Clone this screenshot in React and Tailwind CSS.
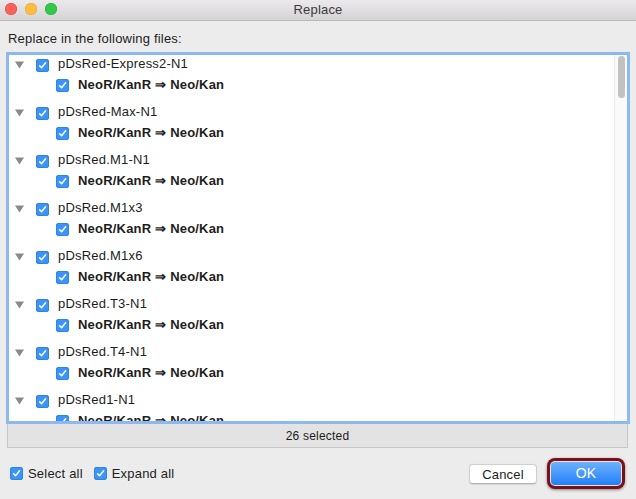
import React from 'react';

const files = [
  'pDsRed-Express2-N1',
  'pDsRed-Max-N1',
  'pDsRed.M1-N1',
  'pDsRed.M1x3',
  'pDsRed.M1x6',
  'pDsRed.T3-N1',
  'pDsRed.T4-N1',
  'pDsRed1-N1',
];

const Check = () => (
  <span className="flex h-[13px] w-[13px] shrink-0 items-center justify-center rounded-[3px] bg-[#3b95f8] shadow-[inset_0_0_0_1px_#2f84e6]">
    <svg width="9" height="9" viewBox="0 0 9 9" fill="none">
      <path d="M1.6 4.8 L3.6 6.8 L7.6 1.8" stroke="white" strokeWidth="1.5" strokeLinecap="round" strokeLinejoin="round" />
    </svg>
  </span>
);

const Triangle = () => (
  <svg width="9" height="8" viewBox="0 0 9 8" className="shrink-0">
    <path d="M0 0.5 H9 L4.5 7.5 Z" fill="#8a8a8a" />
  </svg>
);

export default function App() {
  return (
    <div
      className="flex h-[499px] w-[636px] flex-col overflow-hidden bg-[#ececec] text-[13px] tracking-[0.2px] text-[#1d1d1d]"
      style={{ fontFamily: '"Liberation Sans", Arial, sans-serif' }}
    >
      {/* title bar */}
      <div className="relative flex h-[21px] shrink-0 items-center justify-center border-b border-[#b9b9b9] bg-gradient-to-b from-[#ebe9eb] to-[#d5d3d5]">
        <div className="absolute left-[5px] top-[3px] flex gap-[8px]">
          <span className="h-[12px] w-[12px] rounded-full bg-[#fc605b] shadow-[inset_0_0_0_0.5px_#de4a45]" />
          <span className="h-[12px] w-[12px] rounded-full bg-[#fdbc40] shadow-[inset_0_0_0_0.5px_#dea236]" />
          <span className="h-[12px] w-[12px] rounded-full bg-[#34c84a] shadow-[inset_0_0_0_0.5px_#27aa35]" />
        </div>
        <span className="text-[#3a3a3a]">Replace</span>
      </div>

      <div className="mb-[5px] mt-[10px] h-[16px] pl-[8px] leading-[16px]">Replace in the following files:</div>

      {/* file list */}
      <div className="mx-[6px] flex h-[372px] shrink-0 overflow-hidden border-[3px] border-[#8cb9ef] bg-white">
        <div className="flex-1 overflow-hidden">
          {files.map((name) => (
            <div key={name} className="mb-[8px]">
              <div className="flex h-[20px] items-center pl-[6px]">
                <Triangle />
                <span className="ml-[12px]"><Check /></span>
                <span className="ml-[9px] pb-[3px]">{name}</span>
              </div>
              <div className="flex h-[20px] items-center pl-[47px]">
                <Check />
                <span className="ml-[9px] font-bold">NeoR/KanR ⇒ Neo/Kan</span>
              </div>
            </div>
          ))}
        </div>
        <div className="w-[13px] shrink-0 border-l border-[#ececec] bg-[#fafafa] px-[3px] pt-[1px]">
          <div className="h-[42px] w-[7px] rounded-full bg-[#c2c2c2]" />
        </div>
      </div>

      <div className="mx-[7px] mr-[8px] flex h-[24px] shrink-0 items-center justify-center border border-t-0 border-[#c6c6c6] bg-[#e3e3e3] text-[12px]">
        26 selected
      </div>

      {/* footer */}
      <div className="flex flex-1 items-center pl-[10px] pr-[11px]">
        <Check />
        <span className="ml-[5px]">Select all</span>
        <span className="ml-[11px]"><Check /></span>
        <span className="ml-[5px]">Expand all</span>
        <div className="flex-1" />
        <button className="h-[20px] w-[68px] rounded-[4px] border border-[#cfcfcf] border-b-[#b5b5b5] bg-white text-[13px] shadow-[0_0.5px_1px_rgba(0,0,0,0.1)]">
          Cancel
        </button>
        <div className="ml-[10px] flex h-[31px] w-[78px] items-center justify-center rounded-[8px] bg-[#7c1018] p-[3px] shadow-[0_1px_3px_rgba(0,0,0,0.45)]">
          <div className="flex h-full w-full items-center justify-center rounded-[5px] bg-[#f1e4e4] p-[1px]">
            <div className="flex h-full w-full items-center justify-center rounded-[4px] bg-gradient-to-b from-[#6cb1fb] to-[#1d7ff9] text-[14px] text-white">
              OK
            </div>
          </div>
        </div>
      </div>
    </div>
  );
}
